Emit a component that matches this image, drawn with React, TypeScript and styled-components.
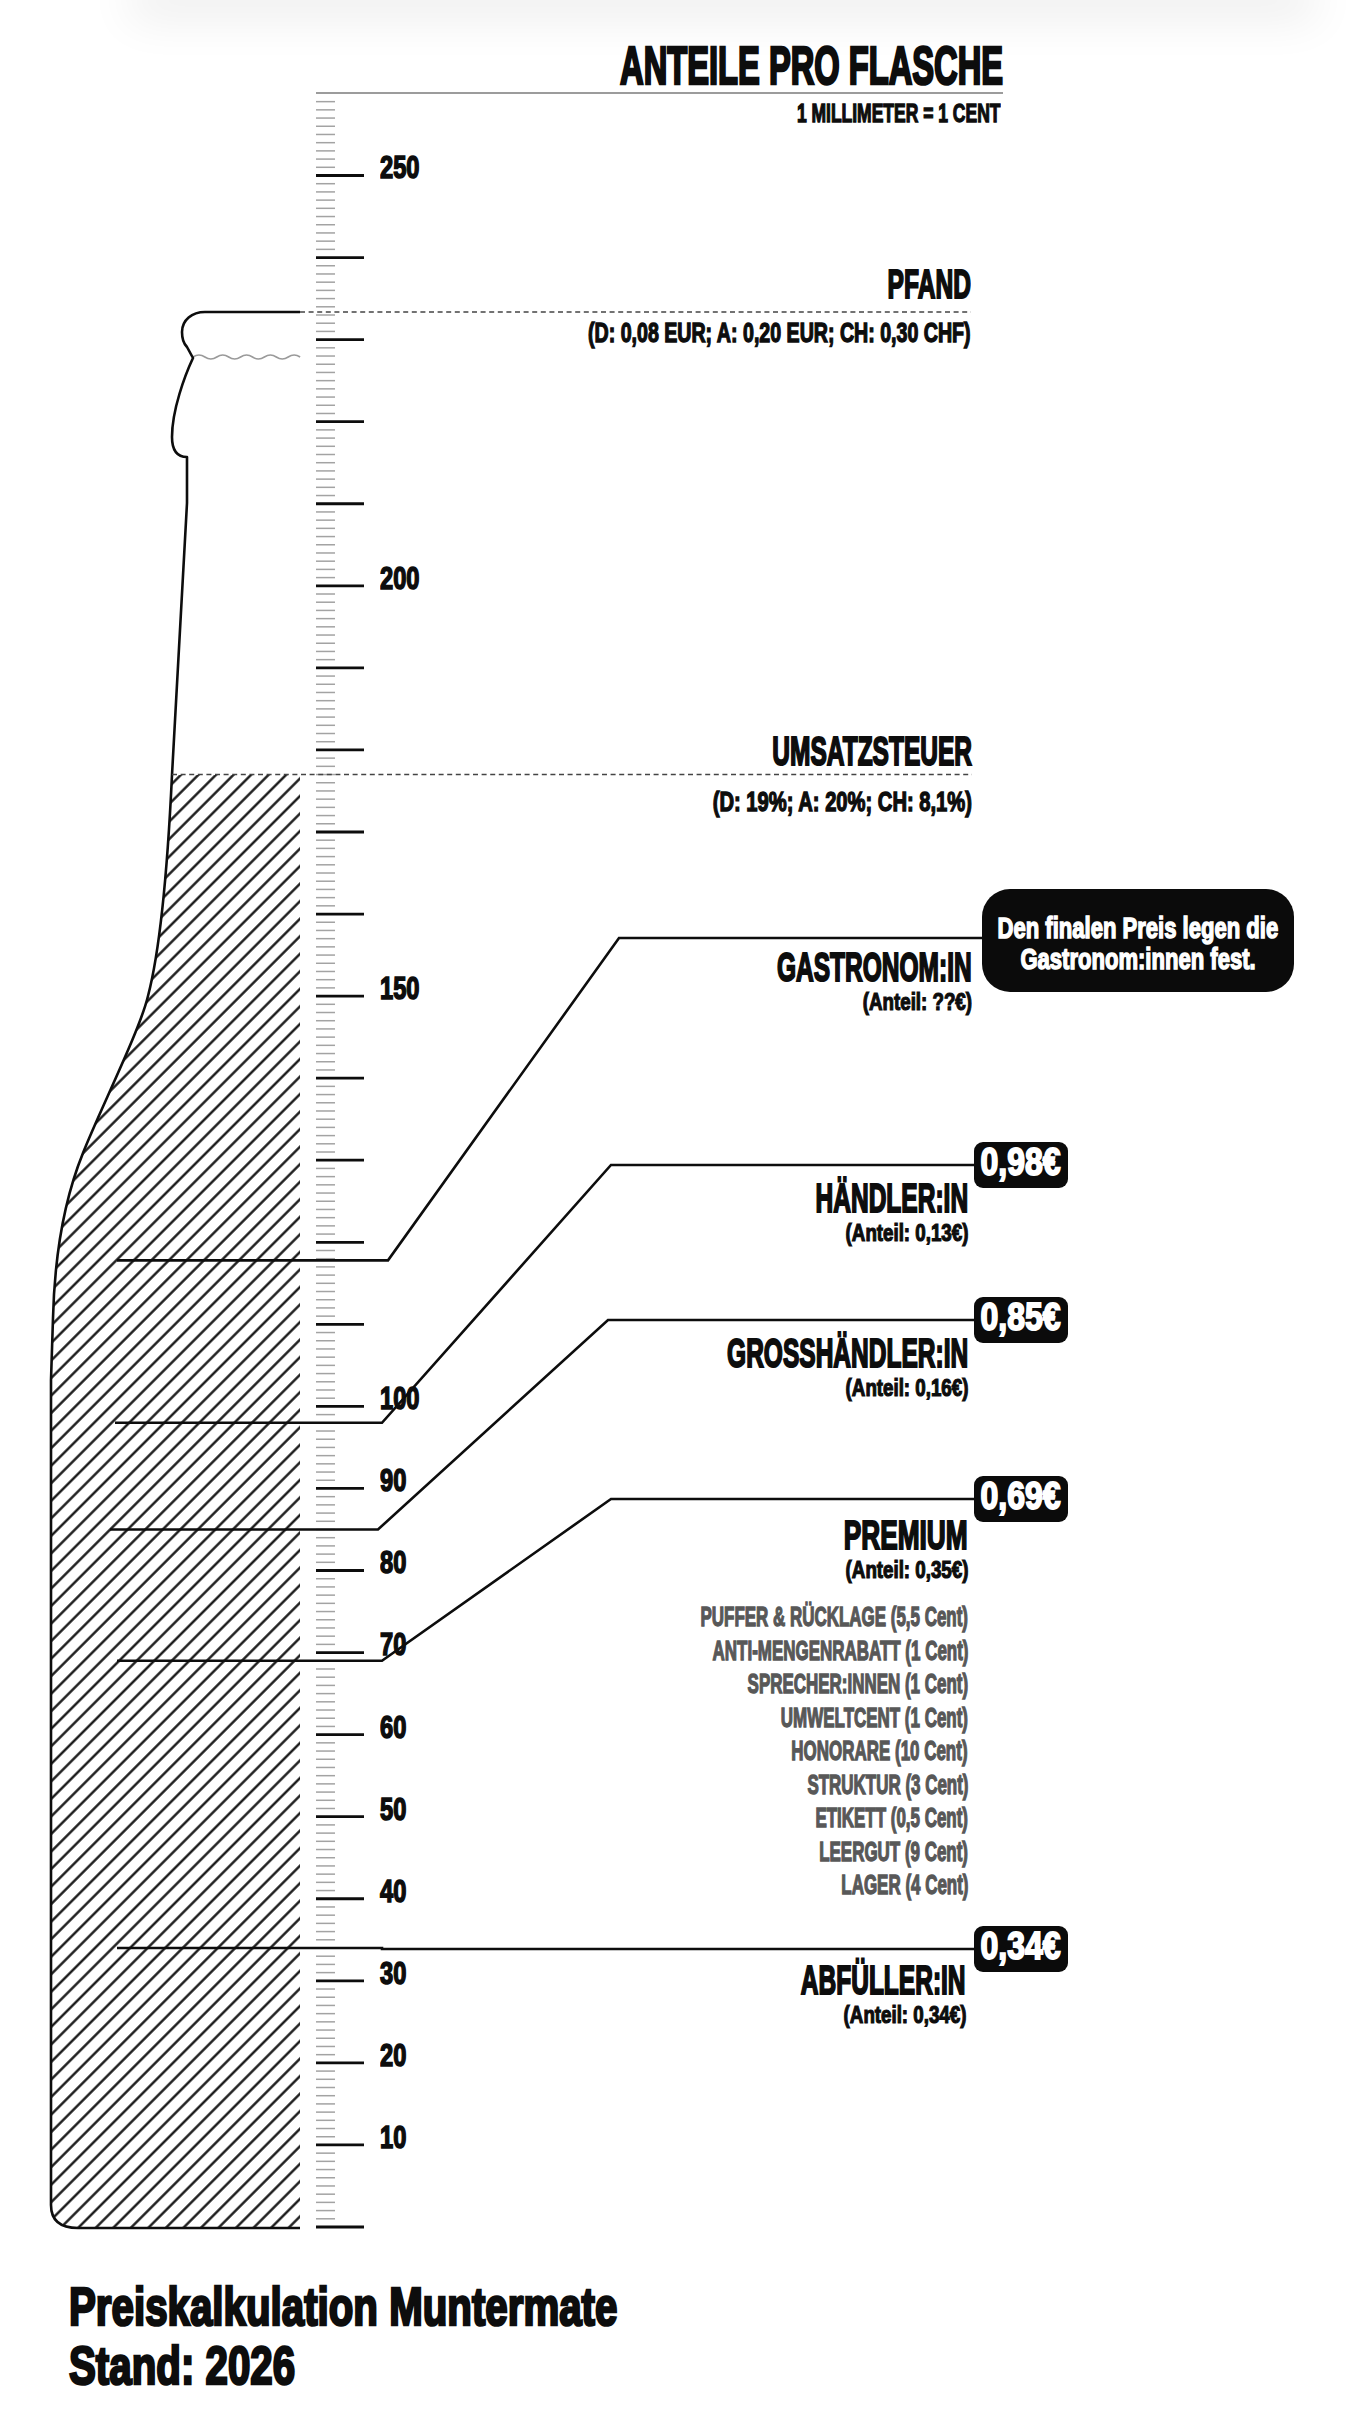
import React from "react";
import styled, { createGlobalStyle } from "styled-components";

// page coordinates of the figure (ruler, bottle, connector lines)
const FIG_TOP = 126;
const FIG_BOTTOM = 2240;
const ZERO_Y = 2227;
const PX_PER_CENT = 8.206;
const cy = (cents: number) => ZERO_Y - cents * PX_PER_CENT;
const BADGE_X = 974;

const GlobalStyle = createGlobalStyle`
  html, body {
    margin: 0;
    padding: 0;
    background: #fff;
  }
  body {
    font-family: "Liberation Sans", Arial, sans-serif;
    color: #0d0d0d;
  }
`;

const Page = styled.div`
  position: relative;
  width: 1356px;
  min-height: 2420px;
`;

const TopShade = styled.div`
  height: 0;
  margin: 0 60px 0 150px;
  box-shadow: 0 0 46px 20px rgba(0, 0, 0, 0.07);
`;

// the reference uses a condensed gothic, so the bold sans is narrowed and thickened a bit
const Squeeze = styled.span<{ $sx: number; $origin?: string }>`
  display: inline-block;
  white-space: nowrap;
  -webkit-text-stroke: 0.05em currentColor;
  transform: scaleX(${(p) => p.$sx});
  transform-origin: ${(p) => p.$origin ?? "right"} center;
`;

const Header = styled.header`
  box-sizing: border-box;
  height: ${FIG_TOP}px;
  width: 685px;
  margin-left: 316px;
  padding-top: 38px;
  text-align: right;
`;

const Title = styled.h1`
  margin: 0 -2px 0 0;
  font-size: 54px;
  line-height: 54px;
  font-weight: 700;
  border-bottom: 2px solid #9c9c9c;
`;

const Scale = styled.div`
  margin-top: 6px;
  padding-right: 1px;
  font-size: 26.5px;
  line-height: 26px;
  font-weight: 700;
`;

const Figure = styled.div`
  position: relative;
  width: 1356px;
  height: ${FIG_BOTTOM - FIG_TOP}px;
`;

const Drawing = styled.svg`
  display: block;
  overflow: visible;
`;

const RulerNum = styled.div`
  position: absolute;
  left: 380px;
  font-size: 32px;
  line-height: 32px;
  font-weight: 700;
`;

const Note = styled.div`
  position: absolute;
  display: flex;
  flex-direction: column;
  align-items: flex-end;
`;

const Heading = styled.div`
  font-size: 41px;
  line-height: 36px;
  font-weight: 700;
`;

const Detail = styled.div<{ $gap: number }>`
  margin-top: ${(p) => p.$gap}px;
  font-size: 28px;
  line-height: 30px;
  font-weight: 700;
`;

const Share = styled.div`
  margin-top: 3px;
  font-size: 24px;
  line-height: 28px;
  font-weight: 700;
`;

const ItemList = styled.ul`
  list-style: none;
  margin: 17px 0 0;
  padding: 0;
  display: flex;
  flex-direction: column;
  align-items: flex-end;
`;

const Item = styled.li`
  font-size: 27px;
  line-height: 33.5px;
  font-weight: 700;
  color: #585858;
`;

const Badge = styled.div`
  position: absolute;
  left: ${BADGE_X}px;
  box-sizing: border-box;
  width: 94px;
  height: 46px;
  border-radius: 9px;
  background: #0b0b0b;
  color: #fff;
  display: flex;
  justify-content: center;
  font-size: 38px;
  line-height: 40px;
  font-weight: 700;
`;

const Callout = styled.div`
  position: absolute;
  left: 982px;
  box-sizing: border-box;
  width: 312px;
  height: 103px;
  padding-top: 23px;
  border-radius: 28px;
  background: #0b0b0b;
  color: #fff;
  display: flex;
  flex-direction: column;
  align-items: center;
  font-size: 30px;
  line-height: 31px;
  font-weight: 700;
`;

const Footer = styled.footer`
  padding: 37px 0 0 69px;
`;

const FooterLine = styled.div`
  font-size: 53px;
  line-height: 59px;
  font-weight: 700;
`;

type Row = {
  key: string;
  cents: number;
  lineY: number;
  startX: number;
  kneeX: number;
  topX: number;
  label: string;
  share: string;
  noteTop: number;
  noteRight: number;
  badge?: string;
  items?: string[];
};

const rows: Row[] = [
  { key: "gastro", cents: 117.8, lineY: 938, startX: 117, kneeX: 388, topX: 619, label: "GASTRONOM:IN", share: "(Anteil: ??€)", noteTop: 949, noteRight: 972 },
  { key: "haendler", cents: 98, lineY: 1165, startX: 115, kneeX: 382, topX: 611, label: "HÄNDLER:IN", share: "(Anteil: 0,13€)", noteTop: 1180, noteRight: 968, badge: "0,98€" },
  { key: "gross", cents: 85, lineY: 1320, startX: 110, kneeX: 378, topX: 608, label: "GROSSHÄNDLER:IN", share: "(Anteil: 0,16€)", noteTop: 1335, noteRight: 968, badge: "0,85€" },
  {
    key: "premium", cents: 69, lineY: 1499, startX: 117, kneeX: 382, topX: 611, label: "PREMIUM", share: "(Anteil: 0,35€)", noteTop: 1517, noteRight: 968, badge: "0,69€",
    items: [
      "PUFFER & RÜCKLAGE (5,5 Cent)",
      "ANTI-MENGENRABATT (1 Cent)",
      "SPRECHER:INNEN (1 Cent)",
      "UMWELTCENT (1 Cent)",
      "HONORARE (10 Cent)",
      "STRUKTUR (3 Cent)",
      "ETIKETT (0,5 Cent)",
      "LEERGUT (9 Cent)",
      "LAGER (4 Cent)",
    ],
  },
  { key: "abf", cents: 34, lineY: 1949, startX: 117, kneeX: 382, topX: 382, label: "ABFÜLLER:IN", share: "(Anteil: 0,34€)", noteTop: 1962, noteRight: 966, badge: "0,34€" },
];

const rulerLabels = [250, 200, 150, 100, 90, 80, 70, 60, 50, 40, 30, 20, 10];

// left side of the bottle, from the liquid level down to the floor
const BODY =
  "M172 775 C168 860 160 950 148 996 C140 1030 100 1110 83 1153 C68 1190 55 1240 53 1318 L51 1380 L51 2205 C51 2220 60 2228 78 2228";

const OUTLINE =
  "M300 312 L205 312 C192 312 182 320 182 332 C182 340 184 344 187 347 L193 358 " +
  "C185 375 172 410 172 437 C172 450 177 457 187 457 L187 503 L172 775 " +
  BODY.slice(BODY.indexOf("C")) +
  " L300 2228";

const LIQUID = BODY + " L300 2228 L300 775 Z";

function wave() {
  let d = "M193 357";
  for (let i = 0; i < 9; i++) d += ` q5.95 ${i % 2 ? 4 : -4} 11.9 0`;
  return d;
}

function Ruler() {
  const ticks = [];
  for (let v = 0; v < 260; v++) {
    const y = cy(v);
    const major = v % 10 === 0;
    ticks.push(
      <line
        key={v}
        x1={316}
        x2={major ? 364 : 335}
        y1={y}
        y2={y}
        stroke={major ? "#0d0d0d" : "#a3a3a3"}
        strokeWidth={major ? 2.8 : 1.5}
      />
    );
  }
  return <g>{ticks}</g>;
}

export default function App() {
  const h = FIG_BOTTOM - FIG_TOP;
  return (
    <Page>
      <GlobalStyle />
      <TopShade />
      <Header>
        <Title>
          <Squeeze $sx={0.605}>ANTEILE PRO FLASCHE</Squeeze>
        </Title>
        <Scale>
          <Squeeze $sx={0.66}>1 MILLIMETER = 1 CENT</Squeeze>
        </Scale>
      </Header>

      <Figure>
        <Drawing width={1356} height={h} viewBox={`0 ${FIG_TOP} 1356 ${h}`}>
          <defs>
            <pattern id="hatch" width="12.4" height="12.4" patternUnits="userSpaceOnUse" patternTransform="rotate(45)">
              <line x1="6.2" y1="0" x2="6.2" y2="12.4" stroke="#0d0d0d" strokeWidth="2.3" />
            </pattern>
          </defs>
          <path d={LIQUID} fill="url(#hatch)" />
          <Ruler />
          <path d={wave()} fill="none" stroke="#9a9a9a" strokeWidth="1.6" />
          <path d={OUTLINE} fill="none" stroke="#0d0d0d" strokeWidth="2.6" strokeLinejoin="round" />
          <line x1={300} x2={971} y1={312} y2={312} stroke="#444" strokeWidth="1.4" strokeDasharray="5 3.6" />
          <line x1={172} x2={972} y1={774.5} y2={774.5} stroke="#444" strokeWidth="1.4" strokeDasharray="5 3.6" />
          {rows.map((r) => {
            const y0 = cy(r.cents);
            const end = r.badge ? BADGE_X : 982;
            return (
              <path
                key={r.key}
                d={`M${r.startX} ${y0} L${r.kneeX} ${y0} L${r.topX} ${r.lineY} L${end} ${r.lineY}`}
                fill="none"
                stroke="#0d0d0d"
                strokeWidth="2.6"
              />
            );
          })}
        </Drawing>

        {rulerLabels.map((v) => (
          <RulerNum key={v} style={{ top: cy(v) + 3 - 27.1 - FIG_TOP }}>
            <Squeeze $sx={0.74} $origin="left">
              {v}
            </Squeeze>
          </RulerNum>
        ))}

        <Note style={{ top: 266 - FIG_TOP, right: 1356 - 971 }}>
          <Heading>
            <Squeeze $sx={0.6}>PFAND</Squeeze>
          </Heading>
          <Detail $gap={16}>
            <Squeeze $sx={0.7}>(D: 0,08 EUR; A: 0,20 EUR; CH: 0,30 CHF)</Squeeze>
          </Detail>
        </Note>

        <Note style={{ top: 733 - FIG_TOP, right: 1356 - 972 }}>
          <Heading>
            <Squeeze $sx={0.598}>UMSATZSTEUER</Squeeze>
          </Heading>
          <Detail $gap={18}>
            <Squeeze $sx={0.72}>(D: 19%; A: 20%; CH: 8,1%)</Squeeze>
          </Detail>
        </Note>

        <Callout style={{ top: 889 - FIG_TOP }}>
          <Squeeze $sx={0.735} $origin="center">
            Den finalen Preis legen die
          </Squeeze>
          <Squeeze $sx={0.735} $origin="center">
            Gastronom:innen fest.
          </Squeeze>
        </Callout>

        {rows.map((r) => (
          <React.Fragment key={r.key}>
            <Note style={{ top: r.noteTop - FIG_TOP, right: 1356 - r.noteRight }}>
              <Heading>
                <Squeeze $sx={r.key === "premium" ? 0.64 : 0.598}>{r.label}</Squeeze>
              </Heading>
              <Share>
                <Squeeze $sx={0.78}>{r.share}</Squeeze>
              </Share>
              {r.items && (
                <ItemList>
                  {r.items.map((it) => (
                    <Item key={it}>
                      <Squeeze $sx={0.628}>{it}</Squeeze>
                    </Item>
                  ))}
                </ItemList>
              )}
            </Note>
            {r.badge && (
              <Badge style={{ top: r.lineY - 23 - FIG_TOP }}>
                <Squeeze $sx={0.84} $origin="center">
                  {r.badge}
                </Squeeze>
              </Badge>
            )}
          </React.Fragment>
        ))}
      </Figure>

      <Footer>
        <FooterLine>
          <Squeeze $sx={0.76} $origin="left">
            Preiskalkulation Muntermate
          </Squeeze>
        </FooterLine>
        <FooterLine>
          <Squeeze $sx={0.76} $origin="left">
            Stand: 2026
          </Squeeze>
        </FooterLine>
      </Footer>
    </Page>
  );
}
